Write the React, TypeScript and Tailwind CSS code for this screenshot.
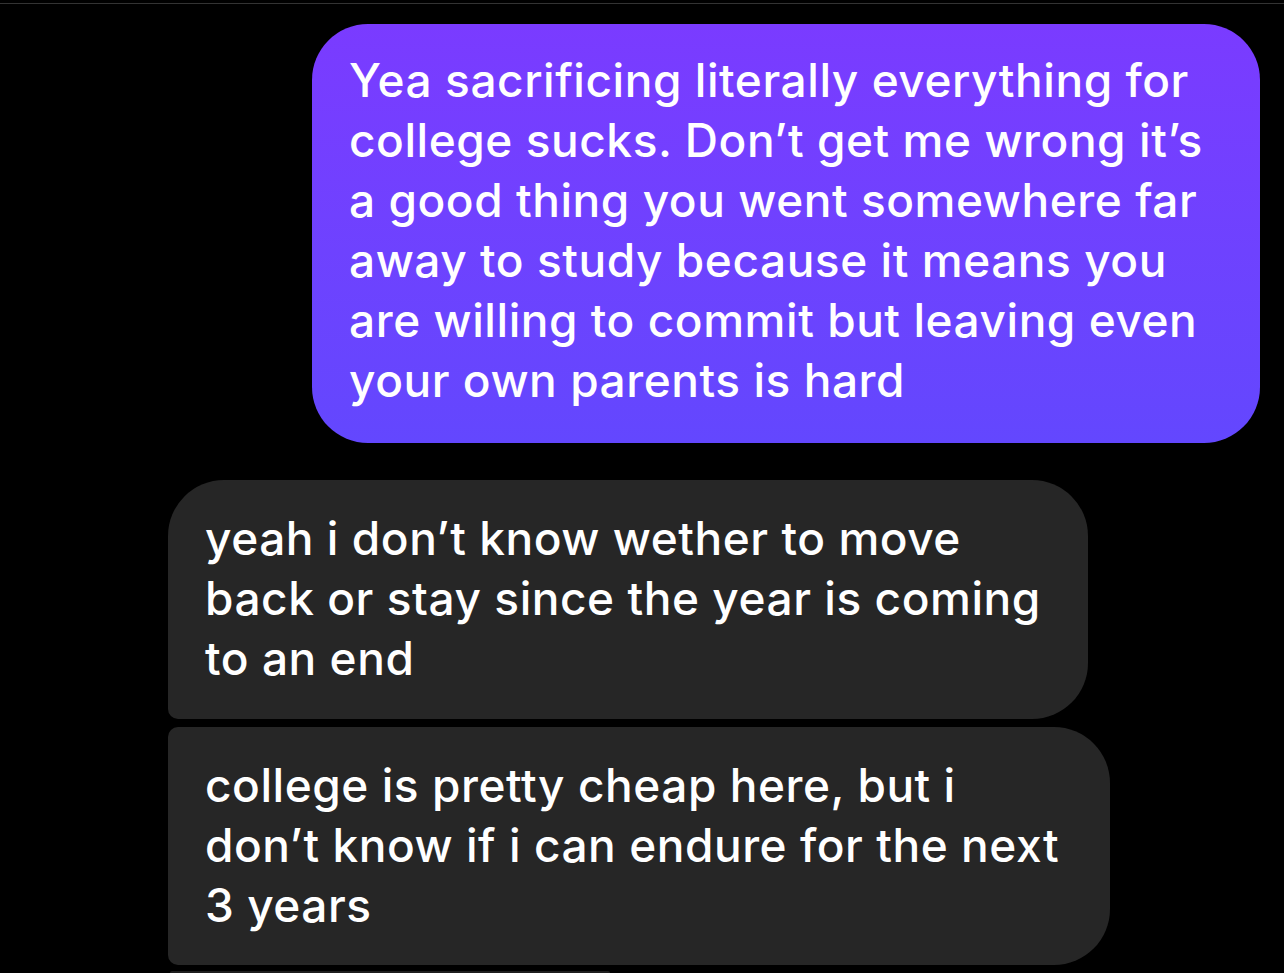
import React from "react";

const font = { fontFamily: "Inter, 'Noto Sans', sans-serif" };

function Lines({ lines }: { lines: string[] }) {
  return (
    <>
      {lines.map((l, i) => (
        <span key={i} className="block whitespace-nowrap">
          {l}
        </span>
      ))}
    </>
  );
}

export default function App() {
  return (
    <div
      className="h-[973px] w-[1284px] bg-black overflow-hidden flex flex-col text-white text-[46px] leading-[60px] font-[550] tracking-[0.55px]"
      style={font}
    >
      <div className="mt-[3px] h-px w-full bg-[#333333] shrink-0" />
      <div className="mt-[20px] ml-[312px] w-[948px] h-[419px] shrink-0 rounded-[56px] bg-gradient-to-b from-[#7a3bff] to-[#6347fe] pl-[37px] pt-[26px]">
        <Lines
          lines={[
            "Yea sacrificing literally everything for",
            "college sucks. Don\u2019t get me wrong it\u2019s",
            "a good thing you went somewhere far",
            "away to study because it means you",
            "are willing to commit but leaving even",
            "your own parents is hard",
          ]}
        />
      </div>
      <div className="mt-[37px] ml-[168px] w-[920px] h-[239px] shrink-0 rounded-[56px] rounded-bl-[10px] bg-[#262626] pl-[37px] pt-[28px]">
        <Lines
          lines={[
            "yeah i don\u2019t know wether to move",
            "back or stay since the year is coming",
            "to an end",
          ]}
        />
      </div>
      <div className="mt-[8px] ml-[168px] w-[942px] h-[238px] shrink-0 rounded-[56px] rounded-tl-[10px] rounded-bl-[10px] bg-[#262626] pl-[37px] pt-[28px]">
        <Lines
          lines={[
            "college is pretty cheap here, but i",
            "don\u2019t know if i can endure for the next",
            "3 years",
          ]}
        />
      </div>
      <div className="mt-[6px] ml-[170px] w-[440px] h-[2px] shrink-0 rounded-t-[4px] bg-[#1e1e1e]" />
    </div>
  );
}
